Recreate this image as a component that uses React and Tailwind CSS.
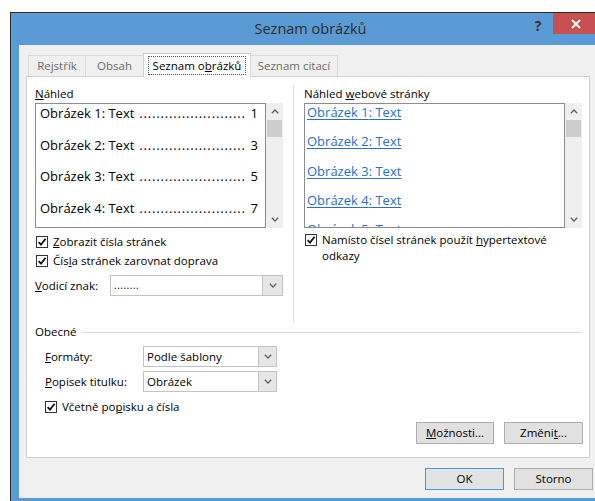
import React from "react";

const FONT = { fontFamily: '"Open Sans", "Noto Sans", sans-serif' };

function Chevron({ up = false, className = "" }) {
  return (
    <svg width="8" height="5" viewBox="0 0 8 5" className={className}>
      <path
        d={up ? "M0.8 4.2 L4 1 L7.2 4.2" : "M0.8 0.8 L4 4 L7.2 0.8"}
        fill="none"
        stroke="#606060"
        strokeWidth="1.3"
      />
    </svg>
  );
}

function Check() {
  return (
    <span className="flex h-[12px] w-[12px] shrink-0 items-center justify-center border border-[#333333] bg-white">
      <svg width="10" height="10" viewBox="0 0 10 10">
        <path d="M1.6 5.2 L4 7.6 L8.6 1.8" fill="none" stroke="#111111" strokeWidth="1.8" />
      </svg>
    </span>
  );
}

function Scrollbar() {
  return (
    <div className="flex w-[17px] flex-col items-center bg-[#efefef]">
      <div className="flex h-[17px] w-full items-center justify-center">
        <Chevron up />
      </div>
      <div className="h-[17px] w-[15px] bg-[#cdcdcd]" />
      <div className="flex-1" />
      <div className="flex h-[17px] w-full items-center justify-center">
        <Chevron />
      </div>
    </div>
  );
}

function Combo({ width, height = 21, btn = 20, children }) {
  return (
    <div
      className="flex border border-[#c3c3c3] bg-white"
      style={{ width, height }}
    >
      <div className="flex flex-1 items-center pl-[3px] text-[11.5px] text-black">{children}</div>
      <div
        className="flex items-center justify-center border-l border-[#c3c3c3] bg-[#e6e6e6]"
        style={{ width: btn }}
      >
        <Chevron />
      </div>
    </div>
  );
}

function Button({ children, primary = false, className = "" }) {
  return (
    <div
      className={
        "flex items-center justify-center border text-[11.5px] text-black " +
        (primary ? "border-[#4f95dc] bg-[#e3e3e3] " : "border-[#adadad] bg-[#e1e1e1] ") +
        className
      }
    >
      {children}
    </div>
  );
}

// dot leader between caption and page number
const LEADER = ".".repeat(25);

function TocRow({ n, page }) {
  return (
    <div className="flex h-[18px] items-center justify-between whitespace-nowrap text-[13px] leading-[18px] text-black">
      <span>Obrázek {n}: Text</span>
      <span className="mx-[3px] tracking-[0.85px]">{LEADER}</span>
      <span>{page}</span>
    </div>
  );
}

function WebRow({ n }) {
  return (
    <div className="h-[16px] whitespace-nowrap text-[13px] leading-[16px] text-[#2870c2] underline decoration-[#2870c2] underline-offset-2">
      Obrázek {n}: Text
    </div>
  );
}

export default function App() {
  return (
    <div className="relative h-[501px] w-[595px] overflow-hidden bg-white" style={FONT}>
      {/* dialog window */}
      <div className="ml-[10px] mt-[12px] flex h-[492px] w-[600px] flex-col border-l border-t border-[#2b2b2b] bg-[#5a9bd5] pb-[6px]">
        {/* title bar */}
        <div className="flex h-[32px] shrink-0">
          <div className="w-[85px] shrink-0" />
          <div className="flex flex-1 items-center justify-center pb-[1px] text-[14.5px] text-[#2b2b2b]">
            Seznam obrázků
          </div>
          <div className="flex w-[85px] shrink-0 items-start">
            <div className="flex h-[24px] w-[26px] items-center justify-center text-[14px] font-bold text-[#333333]">
              ?
            </div>
            <div className="ml-[2px] flex h-[21px] w-[45px] items-center justify-center bg-[#c75050]">
              <svg width="10" height="10" viewBox="0 0 10 10">
                <path d="M1 1 L9 9 M9 1 L1 9" stroke="#ffffff" strokeWidth="1.8" />
              </svg>
            </div>
          </div>
        </div>

        {/* client area */}
        <div className="ml-[8px] flex flex-1 flex-col bg-[#f0f0f0]">
          {/* tab strip */}
          <div className="relative z-10 -mb-px flex h-[32px] items-end pl-[9px] text-[11.5px]">
            <div className="mb-px flex h-[21px] w-[58px] items-center justify-center border border-b-0 border-[#d9d9d9] bg-[#f0f0f0] text-[#6d6d6d]">
              Rejstřík
            </div>
            <div className="-ml-px mb-px flex h-[21px] w-[59px] items-center justify-center border border-b-0 border-[#d9d9d9] bg-[#f0f0f0] text-[#6d6d6d]">
              Obsah
            </div>
            <div className="-ml-px flex h-[24px] w-[108px] items-center justify-center border border-b-0 border-[#d0d0d0] bg-white pb-[1px] text-black">
              <span className="border border-dotted border-[#555555] px-[4px] leading-[17px]">
                Seznam o<span className="underline">b</span>rázků
              </span>
            </div>
            <div className="-ml-px mb-px flex h-[21px] w-[88px] items-center justify-center border border-b-0 border-[#d9d9d9] bg-[#f0f0f0] text-[#6d6d6d]">
              Seznam citací
            </div>
          </div>

          {/* tab page */}
          <div className="ml-[7px] flex h-[382px] w-[564px] flex-col border border-[#d0d0d0] bg-white text-[11.5px] text-black">
            {/* previews */}
            <div className="flex h-[245px] pl-[8px]">
              {/* print preview */}
              <div className="flex w-[248px] flex-col pt-[9px]">
                <div className="h-[15px] leading-[15px]">
                  <span className="underline">N</span>áhled
                </div>
                <div className="mt-[2px] flex h-[125px]">
                  <div className="flex w-[231px] flex-col gap-[13.6px] overflow-hidden border border-[#8c8c8c] pl-[4px] pr-[7px]">
                    <TocRow n={1} page={1} />
                    <TocRow n={2} page={3} />
                    <TocRow n={3} page={5} />
                    <TocRow n={4} page={7} />
                  </div>
                  <Scrollbar />
                </div>
                <div className="mt-[6px] flex h-[16px] items-center gap-[5px] pl-[1px]">
                  <Check />
                  <span>
                    <span className="underline">Z</span>obrazit čísla stránek
                  </span>
                </div>
                <div className="mt-[3px] flex h-[16px] items-center gap-[5px] pl-[1px]">
                  <Check />
                  <span>
                    Čís<span className="underline">l</span>a stránek zarovnat doprava
                  </span>
                </div>
                <div className="mt-[6px] flex h-[21px] items-center">
                  <span className="w-[75px]">
                    <span className="underline">V</span>odicí znak:
                  </span>
                  <Combo width={173} height={21} btn={20}>
                    <span className="text-[10px] tracking-[0.5px]">........</span>
                  </Combo>
                </div>
              </div>

              {/* divider */}
              <div className="ml-[10px] mt-[8px] w-px bg-[#dcdcdc]" />

              {/* web preview */}
              <div className="ml-[10px] flex w-[278px] flex-col pt-[9px]">
                <div className="h-[15px] leading-[15px]">
                  Náhled <span className="underline">w</span>ebové stránky
                </div>
                <div className="mt-[2px] flex h-[125px]">
                  <div className="flex w-[261px] flex-col gap-[13.25px] overflow-hidden border border-[#8c8c8c] pl-[2px]">
                    <WebRow n={1} />
                    <WebRow n={2} />
                    <WebRow n={3} />
                    <WebRow n={4} />
                    <WebRow n={5} />
                  </div>
                  <Scrollbar />
                </div>
                <div className="mt-[4px] flex items-start gap-[5px] pl-[1px]">
                  <div className="mt-[2px]">
                    <Check />
                  </div>
                  <span className="leading-[16px]">
                    Namísto čísel stránek použít <span className="underline">h</span>ypertextové
                    <br />
                    odkazy
                  </span>
                </div>
              </div>
            </div>

            {/* general */}
            <div className="flex h-[20px] items-center pl-[8px] pr-[7px]">
              <span>Obecné</span>
              <div className="ml-[6px] h-px flex-1 bg-[#dcdcdc]" />
            </div>
            <div className="mt-[4px] flex h-[21px] items-center pl-[18px]">
              <span className="w-[98px]">
                <span className="underline">F</span>ormáty:
              </span>
              <Combo width={134} height={21} btn={18}>
                Podle šablony
              </Combo>
            </div>
            <div className="mt-[4px] flex h-[21px] items-center pl-[18px]">
              <span className="w-[98px]">
                <span className="underline">P</span>opisek titulku:
              </span>
              <Combo width={134} height={21} btn={18}>
                Obrázek
              </Combo>
            </div>
            <div className="mt-[7px] flex h-[16px] items-center gap-[5px] pl-[18px]">
              <Check />
              <span>
                Včetně po<span className="underline">p</span>isku a čísla
              </span>
            </div>
            <div className="mt-[7px] flex justify-end gap-[10px] pr-[6px]">
              <Button className="h-[22px] w-[78px]">
                <span>
                  <span className="underline">M</span>ožnosti...
                </span>
              </Button>
              <Button className="h-[22px] w-[79px]">
                <span>
                  Změni<span className="underline">t</span>...
                </span>
              </Button>
            </div>
          </div>

          {/* dialog buttons */}
          <div className="mt-[10px] flex w-[574px] justify-end gap-[10px]">
            <Button primary className="h-[22px] w-[79px]">
              OK
            </Button>
            <Button className="h-[22px] w-[79px]">Storno</Button>
          </div>
        </div>
      </div>
    </div>
  );
}
